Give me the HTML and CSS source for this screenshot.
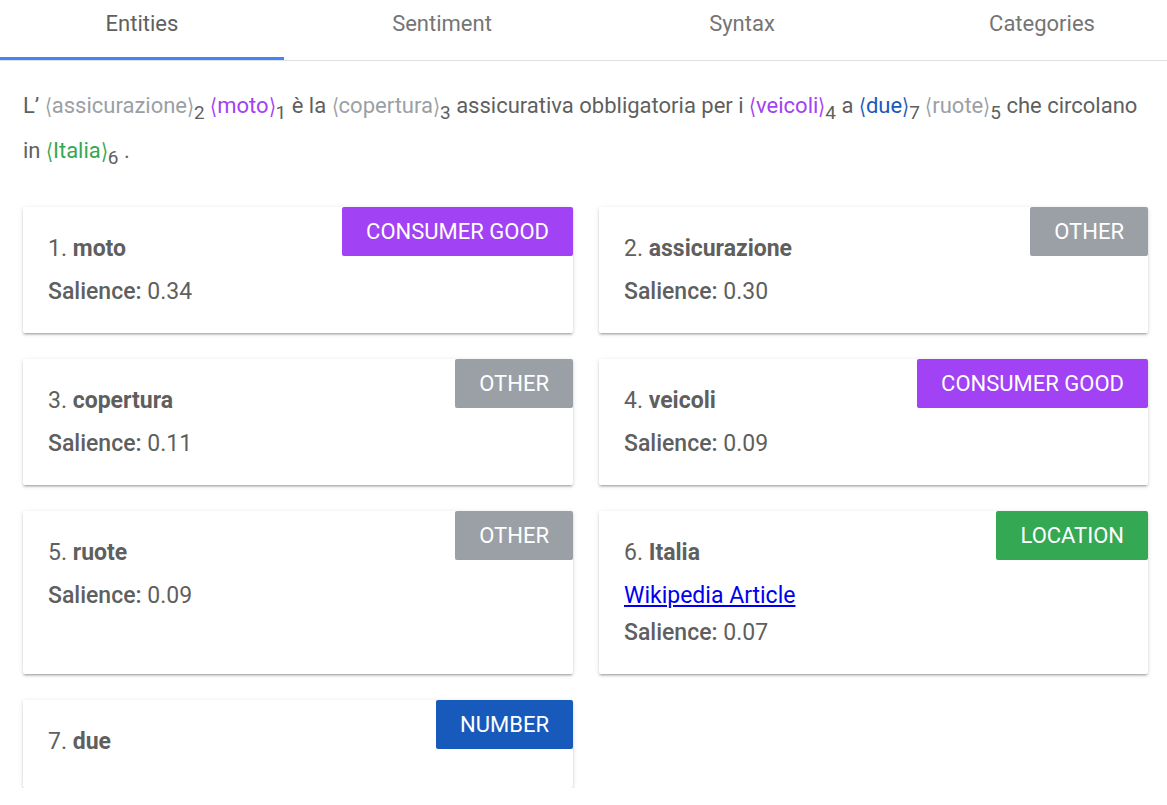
FILE: index.html
```html
<!DOCTYPE html>
<html lang="it">
<head>
<meta charset="utf-8">
<title>Entities</title>
<link rel="stylesheet" href="styles.css">
</head>
<body>
<nav class="tabs">
  <div class="tab active">Entities</div>
  <div class="tab">Sentiment</div>
  <div class="tab">Syntax</div>
  <div class="tab">Categories</div>
</nav>
<main class="content">
  <p class="sentence">L’ <span class="ent other"><span class="br">⟨</span>assicurazione<span class="br">⟩</span></span><sub>2</sub> <span class="ent consumer"><span class="br">⟨</span>moto<span class="br">⟩</span></span><sub>1</sub> è la <span class="ent other"><span class="br">⟨</span>copertura<span class="br">⟩</span></span><sub>3</sub> assicurativa obbligatoria per i <span class="ent consumer"><span class="br">⟨</span>veicoli<span class="br">⟩</span></span><sub>4</sub> a <span class="ent number"><span class="br">⟨</span>due<span class="br">⟩</span></span><sub>7</sub> <span class="ent other"><span class="br">⟨</span>ruote<span class="br">⟩</span></span><sub>5</sub> che circolano in <span class="ent location"><span class="br">⟨</span>Italia<span class="br">⟩</span></span><sub>6</sub> .</p>
  <div class="grid">
    <div class="card">
      <span class="badge consumer-bg">CONSUMER GOOD</span>
      <div class="title">1. <b>moto</b></div>
      <div class="sal"><b>Salience:</b> 0.34</div>
    </div>
    <div class="card">
      <span class="badge other-bg">OTHER</span>
      <div class="title">2. <b>assicurazione</b></div>
      <div class="sal"><b>Salience:</b> 0.30</div>
    </div>
    <div class="card">
      <span class="badge other-bg">OTHER</span>
      <div class="title">3. <b>copertura</b></div>
      <div class="sal"><b>Salience:</b> 0.11</div>
    </div>
    <div class="card">
      <span class="badge consumer-bg">CONSUMER GOOD</span>
      <div class="title">4. <b>veicoli</b></div>
      <div class="sal"><b>Salience:</b> 0.09</div>
    </div>
    <div class="card">
      <span class="badge other-bg">OTHER</span>
      <div class="title">5. <b>ruote</b></div>
      <div class="sal"><b>Salience:</b> 0.09</div>
    </div>
    <div class="card">
      <span class="badge location-bg">LOCATION</span>
      <div class="title">6. <b>Italia</b></div>
      <div class="link"><a href="#">Wikipedia Article</a></div>
      <div class="sal"><b>Salience:</b> 0.07</div>
    </div>
    <div class="card">
      <span class="badge number-bg">NUMBER</span>
      <div class="title">7. <b>due</b></div>
    </div>
  </div>
</main>
</body>
</html>
```
FILE: styles.css
```css
html, body {
  margin: 0;
  padding: 0;
  background: #ffffff;
  overflow: hidden;
}
body {
  font-family: Roboto, "Liberation Sans", Arial, sans-serif;
  color: #5f6368;
  width: 1167px;
}
.tabs {
  display: flex;
  gap: 16px;
  height: 60px;
  border-bottom: 1px solid #e0e0e0;
  width: 1200px;
}
.tab {
  flex: 0 0 284px;
  text-align: center;
  font-size: 22px;
  line-height: 48px;
  color: #757575;
  box-sizing: border-box;
  border-bottom: 3px solid transparent;
  height: 60px;
}
.tab.active {
  color: #5f5f5f;
  border-bottom-color: #4285f4;
}
.content {
  padding: 0 19px 0 23px;
}
.sentence {
  margin: 22px 0 34px 0;
  font-size: 22px;
  line-height: 45px;
  color: #5f5f5f;
}
.sentence .br {
  display: inline-block;
  font-size: 18px;
  line-height: 22px;
  transform: scaleY(1.22);
}
.sentence sub {
  font-size: 19px;
  line-height: 0;
  vertical-align: -6px;
  color: #5f5f5f;
}
.ent.other { color: #9aa0a6; }
.ent.consumer { color: #a142f4; }
.ent.number { color: #185abc; }
.ent.location { color: #34a853; }
.grid {
  display: grid;
  grid-template-columns: 550px 549px;
  column-gap: 26px;
  row-gap: 26px;
}
.card {
  position: relative;
  background: #fff;
  border-radius: 2px;
  box-shadow: 0 2px 2px 0 rgba(0,0,0,0.14), 0 3px 1px -2px rgba(0,0,0,0.12), 0 1px 5px 0 rgba(0,0,0,0.12);
  padding: 28px 25px 17px 25px;
  font-size: 23px;
  color: #5f5f5f;
}
.card b { font-weight: 700; }
.card .sal b { font-weight: 500; }
.title {
  line-height: 28px;
  margin-bottom: 15px;
}
.link {
  line-height: 28px;
  margin-bottom: 9px;
}
.link a { color: #0000ee; text-decoration: underline; }
.sal {
  line-height: 28px;
  margin-bottom: 10px;
}
.badge {
  position: absolute;
  top: 0;
  right: 0;
  height: 49px;
  line-height: 49px;
  padding: 0 24px;
  color: #fff;
  font-size: 22px;
  border-radius: 2px;
  box-sizing: border-box;
}
.consumer-bg { background: #a142f4; }
.other-bg { background: #9aa0a6; }
.location-bg { background: #34a853; }
.number-bg { background: #185abc; }
```
